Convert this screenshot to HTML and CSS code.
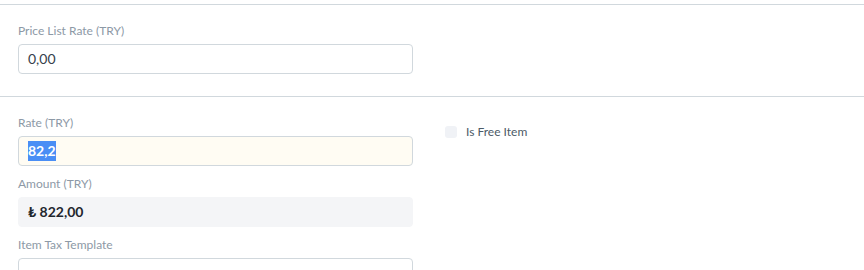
FILE: index.html
```html
<!DOCTYPE html>
<html lang="en">
<head>
	<meta charset="UTF-8">
	<title>Item</title>
	<link rel="stylesheet" href="styles.css">
</head>
<body>
	<div class="form">
		<div class="section">
			<div class="row">
				<div class="col">
					<div class="field">
						<label class="control-label">Price List Rate (TRY)</label>
						<div class="control">0,00</div>
					</div>
				</div>
				<div class="col"></div>
			</div>
		</div>
		<div class="section">
			<div class="row">
				<div class="col">
					<div class="field">
						<label class="control-label">Rate (TRY)</label>
						<div class="control focused"><span class="selected">82,2</span></div>
					</div>
					<div class="field">
						<label class="control-label">Amount (TRY)</label>
						<div class="control static">₺ 822,00</div>
					</div>
					<div class="field">
						<label class="control-label">Item Tax Template</label>
						<div class="control"></div>
					</div>
				</div>
				<div class="col">
					<div class="checkbox">
						<span class="check"></span>
						<span class="check-label">Is Free Item</span>
					</div>
				</div>
			</div>
		</div>
	</div>
</body>
</html>
```

FILE: styles.css
```css
body{
	margin: 0;
	background: #fff;
	font-family: Lato, "Liberation Sans", sans-serif;
	color: #36414c;
}
.form{
	padding-top: 4px;
}
	.section{
		border-top: 1px solid #d1d8dd;
		padding: 18px 18px 12px;
	}
	.row{
		display: grid;
		grid-template-columns: 395px 1fr;
		column-gap: 32px;
	}
	.field{
		margin-bottom: 10px;
	}
	.control-label{
		display: block;
		font-size: 12px;
		line-height: 16px;
		color: #8d99a6;
		margin-bottom: 5px;
	}
	.control{
		box-sizing: border-box;
		height: 30px;
		border: 1px solid #d1d8dd;
		border-radius: 4px;
		padding: 0 9px;
		font-size: 14px;
		line-height: 28px;
		color: #36414c;
	}
	.focused{
		background-color: #fffcf3;
	}
	.selected{
		background-color: #4a8ef5;
		color: #fff;
		font-weight: bold;
		padding: 1px 0 2px;
	}
	.static{
		background-color: #f4f5f7;
		border-color: #f4f5f7;
		font-weight: bold;
		color: #1f272e;
	}
	.checkbox{
		display: flex;
		align-items: center;
		gap: 9px;
		margin-top: 10px;
	}
	.check{
		width: 12px;
		height: 12px;
		border-radius: 3px;
		background-color: #f0f2f6;
	}
	.check-label{
		font-size: 12px;
		line-height: 14px;
		color: #4c5a67;
	}
```
